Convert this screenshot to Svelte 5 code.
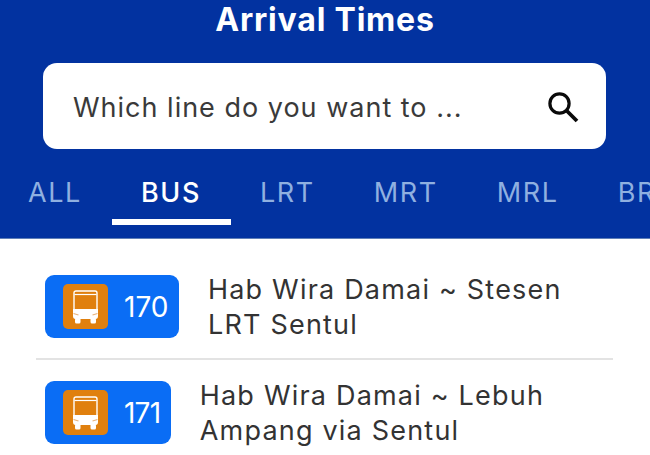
<script>
	const tabs = ['ALL', 'BUS', 'LRT', 'MRT', 'MRL', 'BRT'];
	const routes = [
		{ no: '170', lines: ['Hab Wira Damai ~ Stesen', 'LRT Sentul'] },
		{ no: '171', tight: true, lines: ['Hab Wira Damai ~ Lebuh', 'Ampang via Sentul'] }
	];
</script>

<div class="page">
	<header>
		<h1>Arrival Times</h1>
		<div class="search">
			<span>Which line do you want to ...</span>
			<svg width="34" height="34" viewBox="0 0 34 34" fill="none" stroke="#0a0a0a" stroke-width="3.2">
				<circle cx="13.5" cy="13.5" r="9.6" />
				<path d="M20.5 20.5 L31 31" stroke-width="3.8" />
			</svg>
		</div>
		<nav>
			{#each tabs as tab}
				<div class="tab" class:active={tab === 'BUS'}>{tab}</div>
			{/each}
		</nav>
	</header>

	<ul>
		{#each routes as route}
			<li>
				<div class="badge" class:tight={route.tight}>
					<div class="icon">
						<svg width="27" height="34" viewBox="0 0 27 34">
							<path d="M4 1 H23 Q25 1 25 3 V24 H2 V3 Q2 1 4 1 Z" fill="none" stroke="#fff" stroke-width="1.4" />
							<path d="M2.5 4.5 H24.5" stroke="#fff" stroke-width="1.2" />
							<path d="M1 19 H26 V26 Q26 29 23.5 29 H3.5 Q1 29 1 26 Z" fill="#fff" />
							<rect x="3" y="28" width="5.5" height="5.5" rx="1.5" fill="#fff" />
							<rect x="18.5" y="28" width="5.5" height="5.5" rx="1.5" fill="#fff" />
							<path d="M1.5 23.5 L6.5 25 M25.5 23.5 L20.5 25" stroke="#e8b27a" stroke-width="1.2" />
						</svg>
					</div>
					<span>{route.no}</span>
				</div>
				<div class="name">
					{#each route.lines as line}
						<div>{line}</div>
					{/each}
				</div>
			</li>
		{/each}
	</ul>
</div>

<style>
	:global(body) {
		margin: 0;
		background: #fff;
	}

	.page {
		width: 650px;
		height: 455px;
		overflow: hidden;
		font-family: Inter, "Noto Sans", sans-serif;
	}

	header {
		background: #0232a0;
		height: 239px;
		box-sizing: border-box;
		border-bottom: 1px solid #5f7fb8;
		padding-top: 2px;
	}

	h1 {
		margin: 0;
		height: 39px;
		line-height: 36px;
		color: #fff;
		font-size: 32px;
		font-weight: 700;
		letter-spacing: 0.8px;
		text-align: center;
	}

	.search {
		margin: 22px 44px 0 43px;
		height: 86px;
		background: #fff;
		border-radius: 14px;
		display: flex;
		align-items: center;
		justify-content: space-between;
		padding: 2px 26px 0 30px;
		box-sizing: border-box;
		color: #3a3a3a;
		font-size: 27px;
		letter-spacing: 1px;
	}

	.search svg {
		margin-top: -1px;
	}

	nav {
		display: flex;
		margin: 23px 0 0 -1px;
		white-space: nowrap;
		overflow: hidden;
	}

	.tab {
		padding: 0 30px 0 29px;
		height: 53px;
		line-height: 41px;
		box-sizing: border-box;
		font-size: 27px;
		font-weight: 400;
		letter-spacing: 1.6px;
		color: #8fb0e0;
		flex: none;
	}

	.tab.active {
		color: #fff;
		font-weight: 500;
		border-bottom: 6px solid #fff;
	}

	ul {
		list-style: none;
		margin: 0 36px;
		padding: 0;
		width: 577px;
	}

	li {
		display: flex;
		align-items: center;
		height: 121px;
		box-sizing: border-box;
		padding: 16px 0 0 9px;
		border-bottom: 2px solid #e3e3e3;
	}

	li:last-child {
		border-bottom: none;
		height: 105px;
		padding-top: 0;
	}

	.badge {
		height: 63px;
		background: #0a6df5;
		border-radius: 9px;
		display: flex;
		align-items: center;
		gap: 16px;
		padding: 0 11px 0 18px;
		color: #fff;
		font-size: 28px;
		flex: none;
	}

	.badge.tight {
		letter-spacing: -0.8px;
	}

	.icon {
		width: 45px;
		height: 45px;
		background: #e0800e;
		border-radius: 5px;
		display: flex;
		align-items: center;
		justify-content: center;
	}

	.name {
		margin-left: 28.5px;
		color: #333;
		font-size: 27px;
		letter-spacing: 1.2px;
		line-height: 35px;
		white-space: nowrap;
	}
</style>
